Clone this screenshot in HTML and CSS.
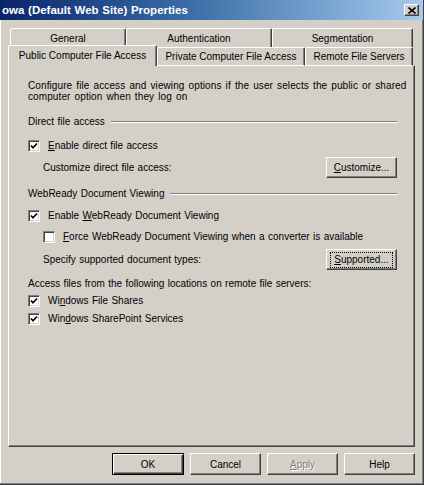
FILE: index.html
```html
<!DOCTYPE html>
<html>
<head>
<meta charset="utf-8">
<link rel="stylesheet" href="styles.css">
</head>
<body>
<div class="window">
  <div class="titlebar">
    <span class="title">owa (Default Web Site) Properties</span>
    <span class="close"><svg width="8" height="7" viewBox="0 0 8 7"><path d="M0.5 0.5 L7.5 6.5 M7.5 0.5 L0.5 6.5" stroke="#000" stroke-width="1.6" fill="none"/></svg></span>
  </div>
  <div class="tabs">
    <div class="tabrow back">
      <div class="tab t-general">General</div>
      <div class="tab t-auth">Authentication</div>
      <div class="tab t-seg">Segmentation</div>
    </div>
    <div class="tabrow front">
      <div class="tab sel t-public">Public Computer File Access</div>
      <div class="tab t-private">Private Computer File Access</div>
      <div class="tab t-remote">Remote File Servers</div>
    </div>
  </div>
  <div class="panel">
    <p class="desc">Configure file access and viewing options if the user selects the public or shared<br>computer option when they log on</p>

    <div class="group g-direct"><span>Direct file access</span><span class="etch"></span></div>

    <div class="check r-enable-direct"><span class="cb on"><svg width="8" height="8" viewBox="0 0 8 8"><path d="M1 3.5 L3 5.8 L7 1.5" stroke="#000" stroke-width="1.7" fill="none"/></svg></span><span><u>E</u>nable direct file access</span></div>

    <div class="btnrow r-customize"><span class="indent">Customize direct file access:</span><span class="btn small"><u>C</u>ustomize...</span></div>

    <div class="group g-webready"><span>WebReady Document Viewing</span><span class="etch"></span></div>

    <div class="check r-enable-web"><span class="cb on"><svg width="8" height="8" viewBox="0 0 8 8"><path d="M1 3.5 L3 5.8 L7 1.5" stroke="#000" stroke-width="1.7" fill="none"/></svg></span><span>Enable <u>W</u>ebReady Document Viewing</span></div>

    <div class="check sub r-force"><span class="cb"></span><span><u>F</u>orce WebReady Document Viewing when a converter is available</span></div>

    <div class="btnrow r-specify"><span class="indent">Specify supported document types:</span><span class="btn small focus"><span class="focusrect"><u>S</u>upported...</span></span></div>

    <div class="line r-access">Access files from the following locations on remote file servers:</div>

    <div class="check r-shares"><span class="cb on"><svg width="8" height="8" viewBox="0 0 8 8"><path d="M1 3.5 L3 5.8 L7 1.5" stroke="#000" stroke-width="1.7" fill="none"/></svg></span><span>Wi<u>n</u>dows File Shares</span></div>

    <div class="check r-sharepoint"><span class="cb on"><svg width="8" height="8" viewBox="0 0 8 8"><path d="M1 3.5 L3 5.8 L7 1.5" stroke="#000" stroke-width="1.7" fill="none"/></svg></span><span>Win<u>d</u>ows SharePoint Services</span></div>
  </div>
  <div class="buttons">
    <span class="btn big default">OK</span>
    <span class="btn big">Cancel</span>
    <span class="btn big disabled"><u>A</u>pply</span>
    <span class="btn big">Help</span>
  </div>
</div>
</body>
</html>
```

FILE: styles.css
```css
html, body {
  margin: 0;
  padding: 0;
  background: #d4d0c8;
}

.window {
  width: 424px;
  height: 485px;
  box-sizing: border-box;
  background: #d4d0c8;
  border-right: 1px solid #404040;
  border-bottom: 1px solid #404040;
  box-shadow: inset -1px -1px #808080, inset 1px 0 #ffffff;
  font-family: "Liberation Sans", Arial, sans-serif;
  font-size: 10px;
  word-spacing: 0.6px;
  color: #000;
  overflow: hidden;
}

.titlebar {
  height: 20px;
  background: linear-gradient(to right, #0a246a 0%, #3a6ea5 45%, #a6caf0 100%);
  display: flex;
  align-items: center;
  justify-content: space-between;
  padding: 0 4px 0 2px;
}

.title {
  color: #fff;
  font-weight: bold;
  font-size: 11.5px;
  word-spacing: 0.5px;
}

.close {
  width: 15px;
  height: 12px;
  box-sizing: border-box;
  background: #d4d0c8;
  border: 1px solid;
  border-color: #fff #404040 #404040 #fff;
  box-shadow: inset -1px -1px #808080;
  display: flex;
  align-items: center;
  justify-content: center;
}

.tabs {
  margin-top: 8px;
  position: relative;
  z-index: 2;
  margin-bottom: -1px;
  word-spacing: 0;
}

.tabrow {
  display: flex;
  align-items: flex-end;
}

.tabrow.back {
  margin-left: 10px;
  height: 19px;
}

.tabrow.front {
  margin-left: 8px;
  margin-top: -2px;
  height: 21px;
  position: relative;
  z-index: 3;
}

.tab {
  box-sizing: border-box;
  background: #d4d0c8;
  border-top: 1px solid #fff;
  border-left: 1px solid #fff;
  border-right: 1px solid #404040;
  box-shadow: inset -1px 0 #808080;
  border-radius: 2px 2px 0 0;
  text-align: center;
  height: 19px;
  line-height: 20px;
}

.tabrow.front .tab {
  height: 19px;
  line-height: 18px;
  border-bottom: 1px solid #fff;
}

.tabrow.front .tab.sel {
  height: 21px;
  line-height: 19px;
  border-bottom: none;
}

.t-general { width: 116px; }
.t-auth { width: 146px; }
.t-seg { width: 141px; }
.t-public { width: 149px; }
.t-private { width: 148px; }
.t-remote { width: 108px; }

.panel {
  position: relative;
  z-index: 1;
  margin-left: 8px;
  width: 407px;
  height: 382px;
  box-sizing: border-box;
  border-top: 1px solid #fff;
  border-left: 1px solid #fff;
  border-right: 1px solid #404040;
  border-bottom: 1px solid #404040;
  box-shadow: inset -1px -1px #808080;
  padding: 0 17px 0 19px;
}

.desc {
  margin: 14px 0 0 0;
  line-height: 11px;
  white-space: nowrap;
  letter-spacing: 0.1px;
  word-spacing: 1.2px;
}

.group {
  display: flex;
  align-items: center;
  height: 13px;
}

.etch {
  flex: 1;
  margin-left: 6px;
  height: 0;
  border-top: 1px solid #808080;
  border-bottom: 1px solid #fff;
}

.g-direct { margin-top: 13px; }
.g-webready { margin-top: 9px; }

.check {
  display: flex;
  align-items: center;
  height: 13px;
}

.check.sub { padding-left: 15px; }

.cb {
  width: 12px;
  height: 12px;
  box-sizing: border-box;
  background: #fff;
  border: 1px solid;
  border-color: #808080 #fff #fff #808080;
  box-shadow: inset 1px 1px #404040, inset -1px -1px #d4d0c8;
  margin-right: 8px;
  display: flex;
  align-items: center;
  justify-content: center;
  flex: none;
}

.r-enable-direct { margin-top: 11px; }
.r-customize { margin-top: 5px; }
.r-enable-web { margin-top: 9px; }
.r-force { margin-top: 8px; }
.r-specify { margin-top: 6px; }
.r-access { margin-top: 7px; height: 13px; line-height: 13px; }
.r-shares { margin-top: 4px; }
.r-sharepoint { margin-top: 5px; }

.btnrow {
  display: flex;
  align-items: center;
  justify-content: space-between;
  height: 21px;
}

.indent { padding-left: 15px; }

.btn {
  box-sizing: border-box;
  background: #d4d0c8;
  border: 1px solid;
  border-color: #fff #404040 #404040 #fff;
  box-shadow: inset -1px -1px #808080;
  display: flex;
  align-items: center;
  justify-content: center;
  height: 21px;
}

.btn.small { width: 71px; }

.focusrect {
  border: 1px dotted #000;
  padding: 1px 3px;
  line-height: 12px;
}

.buttons {
  display: flex;
  justify-content: flex-end;
  gap: 6px;
  margin-top: 6px;
  padding-right: 8px;
  word-spacing: 0;
}

.btn.big {
  width: 71px;
  height: 22px;
}

.btn.default {
  border: 1px solid #000;
  box-shadow: inset 1px 1px #fff, inset -1px -1px #404040, inset -2px -2px #808080;
  width: 72px;
}

.btn.disabled {
  color: #808080;
  text-shadow: 1px 1px #fff;
}
```
